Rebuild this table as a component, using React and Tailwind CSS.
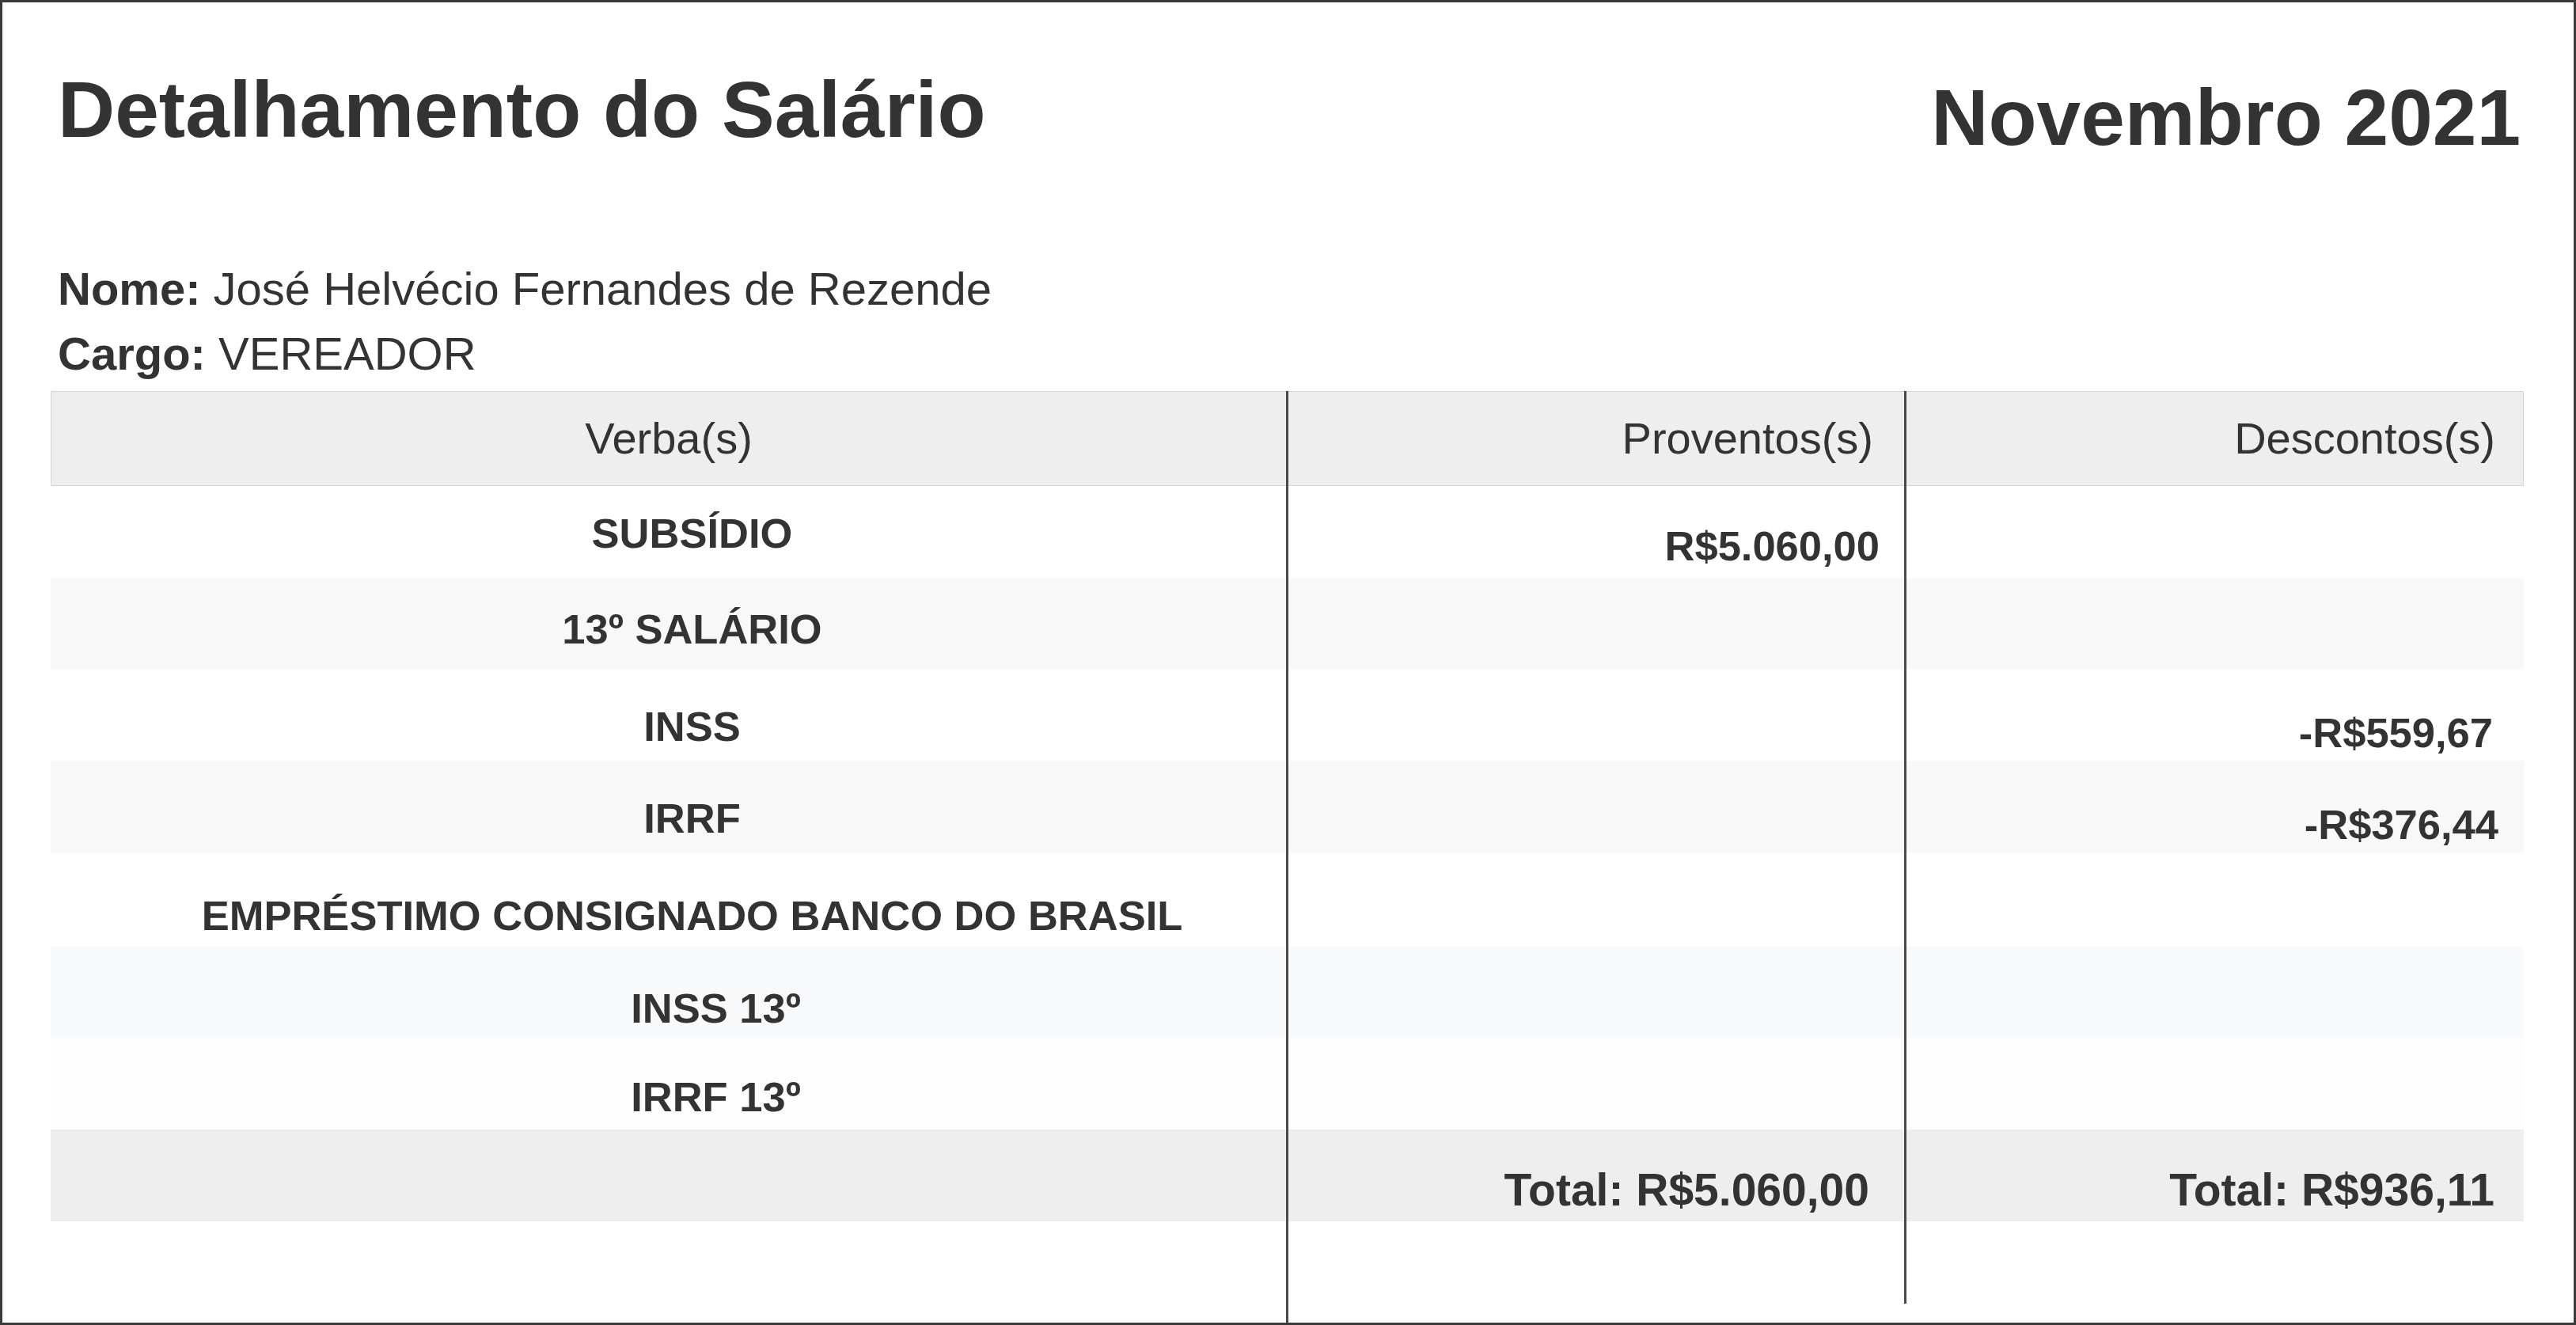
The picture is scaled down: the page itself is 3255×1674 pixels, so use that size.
import React from 'react';

const rows = [
    { verba: 'SUBSÍDIO', row: 'h-[117px] bg-white', t1: 'pt-[34px] pl-[60px]', prov: 'R$5.060,00', t2: 'pt-[50px] pr-[31px]' },
    { verba: '13º SALÁRIO', row: 'h-[114px] bg-[#f8f8f8]', t1: 'pt-[38px] pl-[60px]' },
    { verba: 'INSS', row: 'h-[116px] bg-white', t1: 'pt-[47px] pl-[60px]', desc: '-R$559,67', t3: 'pt-[55px] pr-[39px]' },
    { verba: 'IRRF', row: 'h-[116px] bg-[#f8f8f8]', t1: 'pt-[47px] pl-[60px]', desc: '-R$376,44', t3: 'pt-[55px] pr-[32px]' },
    { verba: 'EMPRÉSTIMO CONSIGNADO BANCO DO BRASIL', row: 'h-[119px] bg-white', t1: 'pt-[54px] pl-[60px]' },
    { verba: 'INSS 13º', row: 'h-[115px] bg-[#f8f9fa]', t1: 'pt-[52px] pl-[120px]' },
    { verba: 'IRRF 13º', row: 'h-[116px] bg-[#fdfdfd]', t1: 'pt-[49px] pl-[120px]' },
];

const totalRow = 'h-[116px] bg-[#eeeeee]';

export default function App() {
    return (
        <div className="w-[3255px] h-[1674px] border-[3px] border-[#3a3a3a] bg-white text-[#333] flex flex-col pl-[61px] pr-[63px] font-['Liberation_Sans',Arial,sans-serif]">
            {/* Cabeçalho */}
            <div className="flex justify-between items-start pt-[85px] pl-[9px]">
                <h1 className="text-[100px] leading-none font-bold">Detalhamento do Salário</h1>
                <h2 className="text-[100px] leading-none font-bold mt-[10px] mr-[4px]">Novembro 2021</h2>
            </div>

            <div className="mt-[126px] pl-[9px] text-[58px] leading-[82px]">
                <p><span className="font-bold">Nome:</span> José Helvécio Fernandes de Rezende</p>
                <p><span className="font-bold">Cargo:</span> VEREADOR</p>
            </div>

            {/* Tabela */}
            <div className="mt-[6px] flex-1 flex items-start">
                {/* Verba(s) */}
                <div className="w-[1564px] self-stretch flex flex-col border-r-[3px] border-[#4a4a4a]">
                    <div className="h-[120px] bg-[#eeeeee] border-y border-l border-[#d6d6d6] text-center text-[56px] leading-none pt-[31px]">
                        Verba(s)
                    </div>
                    {rows.map(r => (
                        <div key={r.verba} className={`${r.row} text-center text-[52.5px] leading-none font-bold`}>
                            <div className={r.t1}>{r.verba}</div>
                        </div>
                    ))}
                    <div className={totalRow}></div>
                </div>

                {/* Proventos(s) */}
                <div className="w-[781px] h-[1153px] flex flex-col border-r-[3px] border-[#4a4a4a]">
                    <div className="h-[120px] bg-[#eeeeee] border-y border-[#d6d6d6] text-right text-[56px] leading-none pt-[31px] pr-[39px]">
                        Proventos(s)
                    </div>
                    {rows.map(r => (
                        <div key={r.verba} className={`${r.row} text-right text-[52.5px] leading-none font-bold`}>
                            {r.prov && <div className={r.t2}>{r.prov}</div>}
                        </div>
                    ))}
                    <div className={`${totalRow} text-right text-[57px] leading-none font-bold`}>
                        <div className="pt-[48px] pr-[44px]">Total: R$5.060,00</div>
                    </div>
                </div>

                {/* Descontos(s) */}
                <div className="w-[780px] flex flex-col">
                    <div className="h-[120px] bg-[#eeeeee] border-y border-r border-[#d6d6d6] text-right text-[56px] leading-none pt-[31px] pr-[35px]">
                        Descontos(s)
                    </div>
                    {rows.map(r => (
                        <div key={r.verba} className={`${r.row} text-right text-[52.5px] leading-none font-bold`}>
                            {r.desc && <div className={r.t3}>{r.desc}</div>}
                        </div>
                    ))}
                    <div className={`${totalRow} text-right text-[57px] leading-none font-bold`}>
                        <div className="pt-[48px] pr-[37px]">Total: R$936,11</div>
                    </div>
                </div>
            </div>
        </div>
    );
}
